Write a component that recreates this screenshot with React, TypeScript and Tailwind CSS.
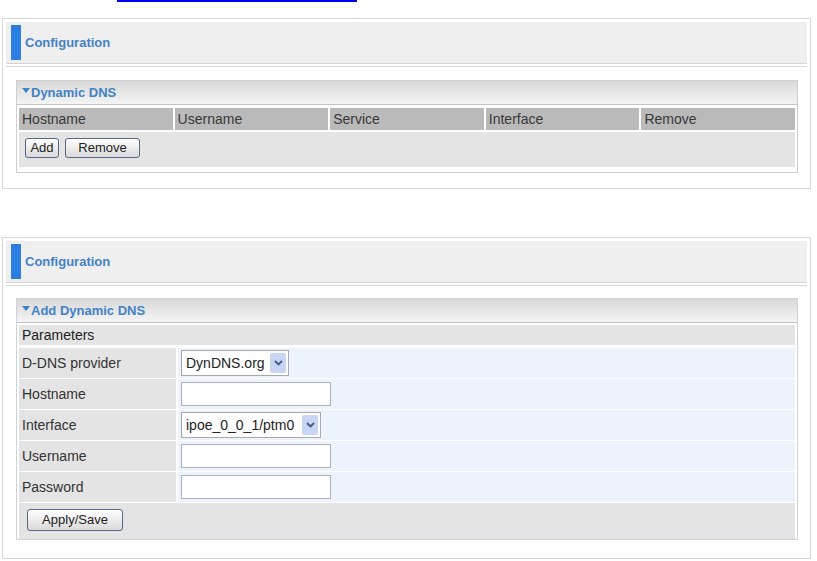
import React from 'react';

const Chevron: React.FC = () => (
  <svg width="9" height="6" viewBox="0 0 9 6" fill="none">
    <path d="M1 1l3.5 3.5L8 1" stroke="#3f5a8c" strokeWidth="1.8" />
  </svg>
);

const Select: React.FC<{ value: string; width: string }> = ({ value, width }) => (
  <div className={`flex h-[26px] items-center justify-between border border-[#a9a9a9] bg-white ${width}`}>
    <span className="pl-[4px] text-[14px] text-[#222]">{value}</span>
    <span className="mr-[2px] flex h-[20px] w-[16px] items-center justify-center rounded-[2px] bg-[#c9d6f3]">
      <Chevron />
    </span>
  </div>
);

const TextBox: React.FC = () => (
  <div className="h-[24px] w-[150px] border border-[#a7b2c2] bg-white" />
);

const Button: React.FC<{ label: string; className?: string }> = ({ label, className = '' }) => (
  <div
    className={`flex h-[20px] items-center justify-center rounded-[3px] border border-[#56698a] bg-linear-to-b from-white to-[#dadada] text-[13px] text-[#222] ${className}`}
  >
    {label}
  </div>
);

const PanelHeader: React.FC = () => (
  <>
    <div className="flex h-[42px] items-center border-b border-[#d6d6d6] bg-[#efefef]">
      <div className="ml-[5px] h-[35px] w-[10px] bg-[#2b7fe0]" />
      <span className="ml-[4px] text-[13px] font-bold text-[#4382c6]">Configuration</span>
    </div>
    <div className="mt-[2px] border-t border-[#d6d6d6]" />
  </>
);

const SectionTitle: React.FC<{ title: string }> = ({ title }) => (
  <div className="flex h-[24px] items-center border-b border-[#c4c4c4] bg-linear-to-b from-[#d9d9d9] to-[#f4f4f4] pl-[5px]">
    <svg width="8" height="5" viewBox="0 0 8 5" className="mb-[4px]">
      <path d="M0 0h8L4 5z" fill="#3f80c8" />
    </svg>
    <span className="ml-[1px] text-[13px] font-bold text-[#4382c6]">{title}</span>
  </div>
);

const rows = [
  { label: 'D-DNS provider', field: <Select value="DynDNS.org" width="w-[108px]" /> },
  { label: 'Hostname', field: <TextBox /> },
  { label: 'Interface', field: <Select value="ipoe_0_0_1/ptm0" width="w-[140px]" /> },
  { label: 'Username', field: <TextBox /> },
  { label: 'Password', field: <TextBox /> },
];

const App: React.FC = () => {
  return (
    <div className="h-[561px] w-[817px] overflow-hidden bg-white font-['Liberation_Sans',Arial,sans-serif]">
      <div className="ml-[117px] h-[2px] w-[240px] bg-[#0000ee]" />

      {/* Dynamic DNS list */}
      <div className="ml-[2px] mt-[16px] h-[171px] w-[809px] border border-[#d8d8d8] p-[3px]">
        <PanelHeader />
        <div className="ml-[10px] mt-[13px] w-[782px] border border-[#cfcfcf]">
          <SectionTitle title="Dynamic DNS" />
          <div className="px-[2px] pb-[5px] pt-[3px]">
            <div className="grid h-[22px] grid-cols-5 gap-[2px] text-[14px] text-[#383838]">
              {['Hostname', 'Username', 'Service', 'Interface', 'Remove'].map((h) => (
                <div key={h} className="flex items-center bg-[#bababa] pl-[3px]">
                  {h}
                </div>
              ))}
            </div>
            <div className="mt-[2px] flex h-[35px] items-start gap-[6px] bg-[#e4e4e4] pl-[6px] pt-[6px]">
              <Button label="Add" className="w-[34px]" />
              <Button label="Remove" className="w-[75px]" />
            </div>
          </div>
        </div>
      </div>

      {/* Add Dynamic DNS */}
      <div className="ml-[2px] mt-[48px] h-[322px] w-[809px] border border-[#d8d8d8] p-[3px]">
        <PanelHeader />
        <div className="ml-[10px] mt-[12px] w-[782px] border border-[#cdd3dc]">
          <SectionTitle title="Add Dynamic DNS" />
          <div className="flex flex-col gap-[1px] px-[2px] pt-[2px] text-[14px] text-[#333]">
            <div className="flex h-[20px] items-center bg-[#e4e4e4] pl-[3px] text-[#222]">Parameters</div>
            <div className="h-[1px]" />
            {rows.map((r) => (
              <div key={r.label} className="flex h-[30px] gap-[2px]">
                <div className="flex w-[157px] items-center bg-[#e4e4e4] pl-[3px]">{r.label}</div>
                <div className="flex flex-1 items-center bg-[#edf3fc] pl-[3px]">{r.field}</div>
              </div>
            ))}
            <div className="flex h-[36px] items-start bg-[#e4e4e4] pl-[8px] pt-[6px]">
              <Button label="Apply/Save" className="h-[22px] w-[96px]" />
            </div>
          </div>
        </div>
      </div>
    </div>
  );
};

export default App;
